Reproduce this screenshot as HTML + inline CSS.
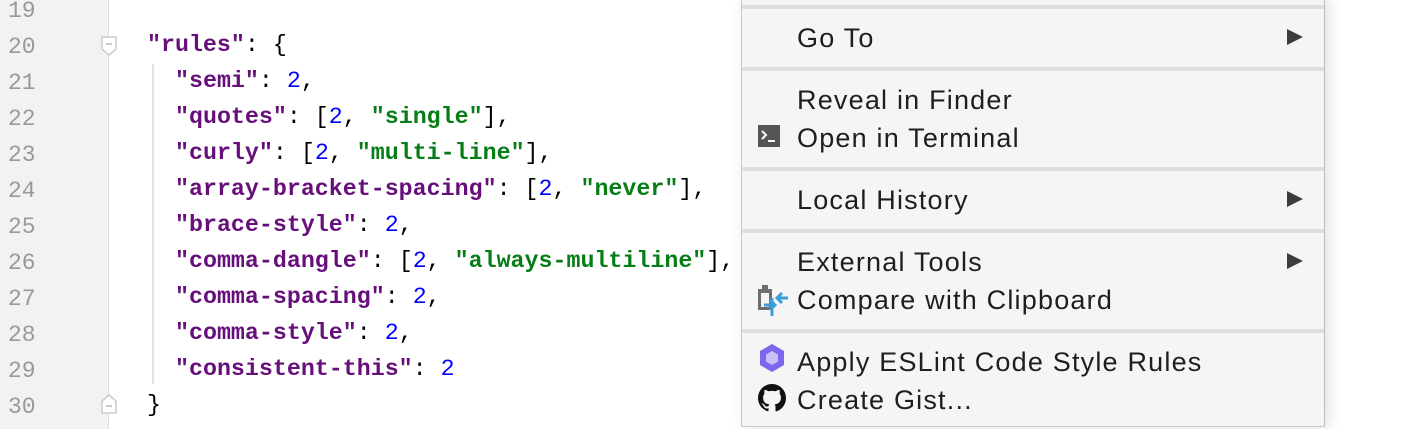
<!DOCTYPE html>
<html><head><style>
body{margin:0;width:1412px;height:429px;overflow:hidden;background:#fff;position:relative;font-family:"Liberation Sans",sans-serif}
.gut{position:absolute;left:0;top:0;width:108px;height:429px;background:#f2f2f2;border-right:1px solid #dcdcdc}
.ln{position:absolute;left:8px;font:23px "Liberation Mono",monospace;color:#999;line-height:36px}
.code{position:absolute;font:bold 23.3px "Liberation Mono",monospace;line-height:36px;white-space:pre;color:#000}
.k{color:#660e7a}.n{color:#0000ff;font-weight:normal}.s{color:#067d17}.p{font-weight:normal}
.menu{position:absolute;left:741px;top:-2px;width:582px;height:428px;background:#f5f5f5;border-left:1px solid #c8c8c8;border-right:1px solid #bdbdbd;border-bottom:1px solid #c8c8c8;box-shadow:4px 0 14px rgba(0,0,0,.12)}
.sep{position:absolute;left:0;width:582px;height:4px;background:#dfdfdf}
.it{position:absolute;left:55px;font-size:27px;letter-spacing:1.2px;color:#1e1e1e;line-height:30px}
.ar{position:absolute;left:545px;width:0;height:0;border-left:16px solid #3c3c3c;border-top:8.5px solid transparent;border-bottom:8.5px solid transparent}
.ic{position:absolute;left:16px}
</style></head><body>
<div class="gut"></div>
<div style="position:absolute;left:152px;top:64px;width:2px;height:320px;background:#e2e2e2"></div>
<svg style="position:absolute;left:101px;top:36px" width="16" height="20"><path d="M1 1H15V13L8 19L1 13Z" fill="#fff" stroke="#ccc" stroke-width="1.5"/><path d="M5 8H11" stroke="#bbb" stroke-width="1.5"/></svg>
<svg style="position:absolute;left:101px;top:394px" width="16" height="20"><path d="M1 19H15V7L8 1L1 7Z" fill="#fff" stroke="#ccc" stroke-width="1.5"/><path d="M5 12H11" stroke="#bbb" stroke-width="1.5"/></svg>
<div class="ln" style="top:-7px">19<br>20<br>21<br>22<br>23<br>24<br>25<br>26<br>27<br>28<br>29<br>30</div>
<div class="code" style="left:147px;top:27px"><span class="k">"rules"</span><span class="p">: {</span></div>
<div class="code" style="left:175px;top:63px"><span class="k">"semi"</span><span class="p">: </span><span class="n">2</span><span class="p">,</span>
<span class="k">"quotes"</span><span class="p">: [</span><span class="n">2</span><span class="p">, </span><span class="s">"single"</span><span class="p">],</span>
<span class="k">"curly"</span><span class="p">: [</span><span class="n">2</span><span class="p">, </span><span class="s">"multi-line"</span><span class="p">],</span>
<span class="k">"array-bracket-spacing"</span><span class="p">: [</span><span class="n">2</span><span class="p">, </span><span class="s">"never"</span><span class="p">],</span>
<span class="k">"brace-style"</span><span class="p">: </span><span class="n">2</span><span class="p">,</span>
<span class="k">"comma-dangle"</span><span class="p">: [</span><span class="n">2</span><span class="p">, </span><span class="s">"always-multiline"</span><span class="p">],</span>
<span class="k">"comma-spacing"</span><span class="p">: </span><span class="n">2</span><span class="p">,</span>
<span class="k">"comma-style"</span><span class="p">: </span><span class="n">2</span><span class="p">,</span>
<span class="k">"consistent-this"</span><span class="p">: </span><span class="n">2</span></div>
<div class="code" style="left:147px;top:387px"><span class="p">}</span></div>
<div class="menu">
<div class="sep" style="top:7px"></div>
<div class="it" style="top:25px">Go To</div><div class="ar" style="top:31px"></div>
<div class="sep" style="top:69px"></div>
<div class="it" style="top:87px">Reveal in Finder</div>
<svg class="ic" style="top:127px" width="22" height="22"><rect width="22" height="22" fill="#555"/><path d="M4 6L8 10L4 14" stroke="#fff" stroke-width="2" fill="none"/><path d="M10 16H17" stroke="#fff" stroke-width="2"/></svg>
<div class="it" style="top:125px">Open in Terminal</div>
<div class="sep" style="top:169px"></div>
<div class="it" style="top:187px">Local History</div><div class="ar" style="top:193px"></div>
<div class="sep" style="top:231px"></div>
<div class="it" style="top:249px">External Tools</div><div class="ar" style="top:255px"></div>
<svg class="ic" style="top:286px" width="32" height="32"><rect x="0" y="5" width="14" height="21" fill="#6e6e6e"/><rect x="4" y="1" width="6" height="6" fill="#6e6e6e"/><rect x="3" y="9" width="8" height="14" fill="#f5f5f5"/><path d="M30 14H20M24 9L19 14L24 19" stroke="#3aa0dc" stroke-width="3" fill="none"/><path d="M6 21H16M12 16L17 21L12 26" stroke="#3aa0dc" stroke-width="3" fill="none"/><path d="M14 14V32" stroke="#3aa0dc" stroke-width="3"/></svg>
<div class="it" style="top:287px">Compare with Clipboard</div>
<div class="sep" style="top:331px"></div>
<svg class="ic" style="top:345px;left:15px" width="30" height="30"><polygon points="15,1 27,8 27,22 15,29 3,22 3,8" fill="#7b68ee"/><polygon points="15,8 21,11.5 21,18.5 15,22 9,18.5 9,11.5" fill="#c8c0f8"/></svg>
<div class="it" style="top:349px">Apply ESLint Code Style Rules</div>
<svg class="ic" style="top:386px" width="28" height="28" viewBox="0 0 16 16"><path fill="#111" d="M8 0C3.58 0 0 3.58 0 8c0 3.540 2.29 6.53 5.47 7.59.4.07.55-.17.55-.38v-1.33c-2.23.48-2.7-1.07-2.7-1.070-.36-.92-.89-1.17-.89-1.17-.73-.5.06-.49.06-.49.8.06 1.23.82 1.23.82.72 1.23 1.87.87 2.33.67.07-.52.28-.87.51-1.07-1.78-.2-3.65-.89-3.65-3.95 0-.87.31-1.59.82-2.15-.08-.2-.36-1.02.08-2.12 0 0 .67-.21 2.2.82a7.6 7.6 0 014 0c1.53-1.04 2.2-.82 2.2-.82.44 1.1.16 1.92.08 2.12.51.56.82 1.270.82 2.15 0 3.07-1.87 3.75-3.65 3.95.29.25.54.73.54 1.48v2.2c0 .21.15.46.55.38A8 8 0 0016 8c0-4.42-3.58-8-8-8z"/></svg>
<div class="it" style="top:387px">Create Gist...</div>
</div>
</body></html>
